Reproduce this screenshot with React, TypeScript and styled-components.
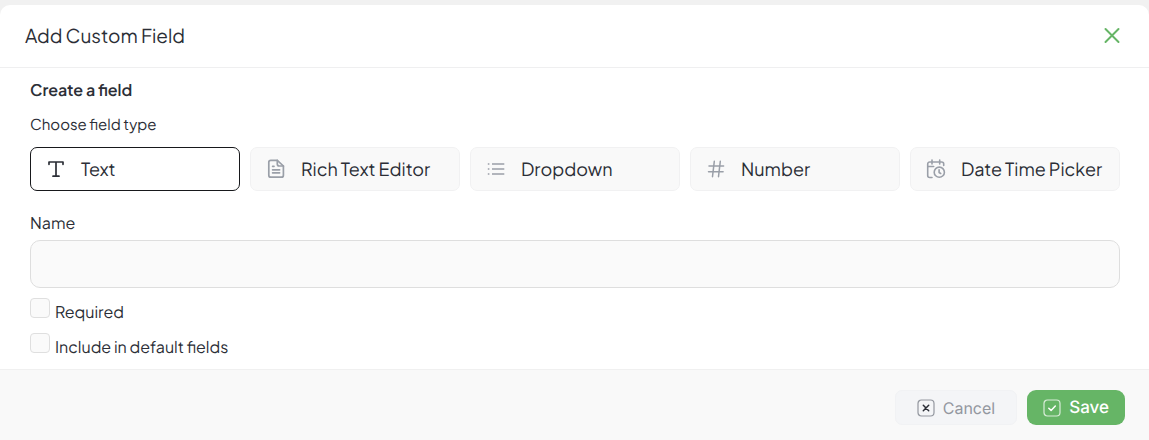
import React, { useState } from "react";
import styled, { createGlobalStyle } from "styled-components";

const GlobalStyle = createGlobalStyle`
  *, *::before, *::after { box-sizing: border-box; }
  body {
    margin: 0;
    background: #f1f1f1;
    color: #2b2e36;
    font-family: "Plus Jakarta Sans", Inter, sans-serif;
    font-size: 16px;
    text-rendering: geometricPrecision;
  }
  button, input { font: inherit; color: inherit; text-rendering: inherit; }
`;

const Page = styled.main`
  padding-top: 5px;
`;

const Dialog = styled.form`
  background: #ffffff;
  border-radius: 10px 10px 0 0;
  overflow: hidden;
`;

const Header = styled.header`
  display: flex;
  align-items: center;
  justify-content: space-between;
  padding: 16px 25px;
  border-bottom: 1px solid #efeff0;
`;

const Title = styled.h1`
  margin: 0;
  font-size: 19px;
  font-weight: 400;
  line-height: 30px;
`;

const CloseButton = styled.button`
  display: flex;
  padding: 3px;
  border: 0;
  background: none;
  color: #66b566;
  cursor: pointer;
`;

const Body = styled.div`
  padding: 10px 29px 8px 30px;
`;

const SectionTitle = styled.h2`
  margin: 0 0 11px;
  font-size: 16px;
  font-weight: 600;
  line-height: 24px;
`;

const TypeGroup = styled.fieldset`
  margin: 0 0 20px;
  padding: 0;
  border: 0;
  min-width: 0;
`;

const TypeLegend = styled.legend`
  margin-bottom: 10px;
  padding: 0;
  font-size: 15px;
  line-height: 24px;
`;

const TypeGrid = styled.div`
  display: grid;
  grid-template-columns: repeat(5, minmax(0, 1fr));
  gap: 10px;
`;

const TypeButton = styled.button<{ $active: boolean }>`
  display: flex;
  align-items: center;
  gap: 14px;
  height: 44px;
  padding: 0 14px;
  border: 1px solid ${(p) => (p.$active ? "#17181b" : "#f1f1f2")};
  border-radius: 7px;
  background: ${(p) => (p.$active ? "#ffffff" : "#f9f9f9")};
  font-size: 18px;
  line-height: 24px;
  white-space: nowrap;
  cursor: pointer;

  svg {
    flex: none;
    color: ${(p) => (p.$active ? "#2b2e36" : "#9a9fa8")};
  }
`;

const NameLabel = styled.label`
  display: block;
  margin-bottom: 5px;
  line-height: 24px;
`;

const NameInput = styled.input`
  display: block;
  width: 100%;
  height: 48px;
  padding: 0 16px;
  border: 1px solid #dedede;
  border-radius: 10px;
  background: #fafafa;
  outline: none;
`;

const Checks = styled.div`
  display: grid;
  gap: 7px;
  margin-top: 10px;
`;

const CheckLabel = styled.label`
  display: flex;
  gap: 5px;
  line-height: 28px;
`;

const Checkbox = styled.input`
  appearance: none;
  width: 20px;
  height: 20px;
  margin: 0;
  border: 1px solid #dfdfdf;
  border-radius: 4px;
  background: #fafafa;

  &:checked {
    background: #66b566;
  }
`;

const Footer = styled.footer`
  display: flex;
  justify-content: flex-end;
  gap: 10px;
  padding: 20px 24px 15px;
  border-top: 1px solid #f0f0f0;
  background: #f9f9f9;
`;

const ActionButton = styled.button<{ $primary?: boolean }>`
  display: flex;
  align-items: center;
  gap: 8px;
  height: 35px;
  padding: 0 ${(p) => (p.$primary ? 16 : 21)}px;
  border: ${(p) => (p.$primary ? "0" : "1px solid #f1f2f4")};
  border-radius: ${(p) => (p.$primary ? 9 : 7)}px;
  background: ${(p) => (p.$primary ? "#66b566" : "#f4f5f7")};
  color: ${(p) => (p.$primary ? "#ffffff" : "#93979f")};
  font-family: Inter, sans-serif;
  font-size: ${(p) => (p.$primary ? 17 : 16)}px;
  font-weight: ${(p) => (p.$primary ? 500 : 400)};
  cursor: pointer;
`;

const Icon = ({ size = 22, width = 1.5, children }: { size?: number; width?: number; children: React.ReactNode }) => (
  <svg
    width={size}
    height={size}
    viewBox={`0 0 ${size} ${size}`}
    fill="none"
    stroke="currentColor"
    strokeWidth={width}
    strokeLinecap="round"
    strokeLinejoin="round"
    aria-hidden="true"
  >
    {children}
  </svg>
);

const fieldTypes = [
  {
    name: "Text",
    icon: (
      <Icon width={1.7}>
        <path d="M4 6.3V4h14v2.3M11 4v14.2M8 18.2h6" />
      </Icon>
    ),
  },
  {
    name: "Rich Text Editor",
    icon: (
      <Icon width={1.7}>
        <path d="M12.3 2.3H5.8a2 2 0 0 0-2 2v12.9a2 2 0 0 0 2 2h10.6a2 2 0 0 0 2-2V8z" />
        <path d="M12.3 2.3V6a2 2 0 0 0 2 2h4.1M7.6 8.3h1.4M7.6 11.8h7M7.6 14.8h7" />
      </Icon>
    ),
  },
  {
    name: "Dropdown",
    icon: (
      <Icon width={1.6}>
        <path strokeLinecap="butt" d="M7 6h12.3M7 11h12.3M7 16h12.3M2.8 6h1.6M2.8 11h1.6M2.8 16h1.6" />
      </Icon>
    ),
  },
  {
    name: "Number",
    icon: (
      <Icon width={1.5}>
        <path d="M9.3 3.3L7.5 18.7M15.3 3.3l-1.8 15.4M4 8h14.6M3.5 13.8h14.6" />
      </Icon>
    ),
  },
  {
    name: "Date Time Picker",
    icon: (
      <Icon width={1.6}>
        <path d="M18.7 7.5V6a2 2 0 0 0-2-2h-12a2 2 0 0 0-2 2v11.5a2 2 0 0 0 2 2h2.3M7 2v4M14.7 2v4M2.7 8.5h6" />
        <circle cx="14.3" cy="14.2" r="5.1" />
        <path d="M14.1 11.8v2.7l1.6 1" />
      </Icon>
    ),
  },
];

export default function App() {
  const [type, setType] = useState("Text");

  return (
    <Page>
      <GlobalStyle />
      <Dialog onSubmit={(e) => e.preventDefault()}>
        <Header>
          <Title>Add Custom Field</Title>
          <CloseButton type="button" aria-label="Close">
            <Icon size={18} width={2}>
              <path d="M2.5 2l13 13M15.5 2l-13 13" />
            </Icon>
          </CloseButton>
        </Header>
        <Body>
          <SectionTitle>Create a field</SectionTitle>
          <TypeGroup>
            <TypeLegend>Choose field type</TypeLegend>
            <TypeGrid>
              {fieldTypes.map((f) => (
                <TypeButton
                  key={f.name}
                  type="button"
                  $active={f.name === type}
                  aria-pressed={f.name === type}
                  onClick={() => setType(f.name)}
                >
                  {f.icon}
                  {f.name}
                </TypeButton>
              ))}
            </TypeGrid>
          </TypeGroup>
          <NameLabel htmlFor="field-name">Name</NameLabel>
          <NameInput id="field-name" type="text" />
          <Checks>
            <CheckLabel>
              <Checkbox type="checkbox" />
              Required
            </CheckLabel>
            <CheckLabel>
              <Checkbox type="checkbox" />
              Include in default fields
            </CheckLabel>
          </Checks>
        </Body>
        <Footer>
          <ActionButton type="button">
            <Icon size={18} width={1.2}>
              <rect x="1" y="1" width="16" height="16" rx="3.5" />
              <path stroke="#2b2e36" strokeWidth="1.5" d="M6.3 6.3l5.4 5.4M11.7 6.3l-5.4 5.4" />
            </Icon>
            Cancel
          </ActionButton>
          <ActionButton type="submit" $primary>
            <Icon size={18} width={1.2}>
              <rect x="1" y="1" width="16" height="16" rx="3.5" strokeOpacity="0.75" />
              <path strokeWidth="1.5" d="M5.8 9.2l2.3 2.2 4.2-4.4" />
            </Icon>
            Save
          </ActionButton>
        </Footer>
      </Dialog>
    </Page>
  );
}
